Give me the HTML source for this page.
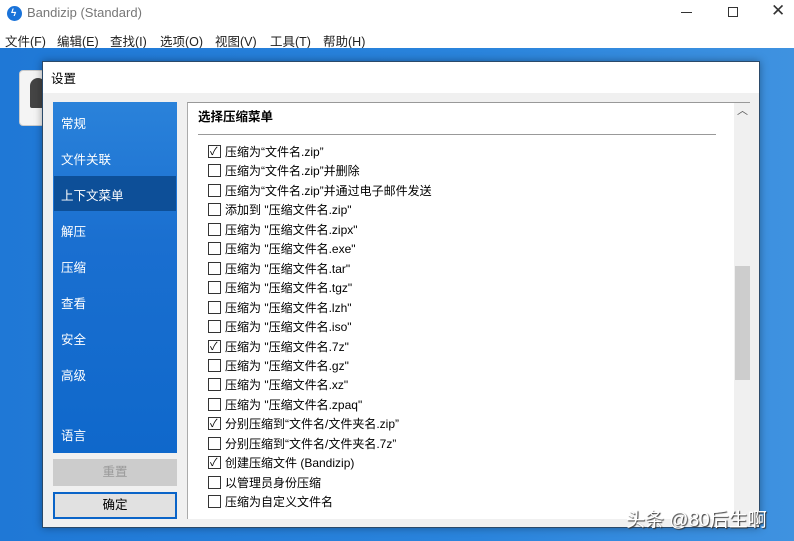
<!DOCTYPE html>
<html><head><meta charset="utf-8"><style>
*{margin:0;padding:0;box-sizing:border-box}
body{width:794px;height:541px;overflow:hidden;position:relative;background:#fff;font-family:"Liberation Sans","Noto Sans CJK SC",sans-serif;font-size:12px;color:#000}
.a{position:absolute}
.menu span{position:absolute;white-space:nowrap}
.blue{left:0;top:48px;width:794px;height:493px;background:linear-gradient(90deg,#1f78d6 0%,#2a84dc 60%,#3f92e0 100%)}
.dlg{left:42px;top:61px;width:718px;height:467px;background:#f0f0f0;border:1px solid #2b4a6a;box-shadow:0 0 8px rgba(0,0,0,.35)}
.side{left:10px;top:40px;width:124px;height:351px;background:linear-gradient(180deg,#2a82da,#1a6fd0 40%,#0f68cb)}
.side div{position:absolute;left:8px;color:#fff;font-size:12.5px}
.cb{position:absolute;left:20px;width:13px;height:13px;border:1px solid #333;background:#fff}
.row{position:absolute;left:37px;font-size:12px;white-space:nowrap}
</style></head><body>
<div class="a" style="left:7px;top:6px;width:15px;height:15px;border-radius:50%;background:#1a73d9"></div>
<div class="a" style="left:11px;top:8px;color:#fff;font-size:10px;font-weight:bold">ϟ</div>
<div class="a" style="left:27px;top:5px;font-size:13px;color:#777">Bandizip (Standard)</div>
<div class="a" style="left:681px;top:12px;width:11px;height:1px;background:#333"></div>
<div class="a" style="left:728px;top:7px;width:10px;height:10px;border:1px solid #333"></div>
<div class="a" style="left:771px;top:1px;font-size:17px;color:#333">✕</div>
<div class="a menu" style="left:0;top:31px;font-size:12.5px;color:#222"><span style="left:5px">文件(F)</span><span style="left:57px">编辑(E)</span><span style="left:110px">查找(I)</span><span style="left:160px">选项(O)</span><span style="left:215px">视图(V)</span><span style="left:270px">工具(T)</span><span style="left:323px">帮助(H)</span></div>
<div class="a blue"></div>
<div class="a" style="left:19px;top:70px;width:40px;height:56px;background:#f4f4f4;border-radius:4px;border:1px solid #ccc"></div>
<div class="a" style="left:30px;top:78px;width:16px;height:30px;background:#444;border-radius:8px 8px 2px 2px"></div>
<div class="a dlg">
 <div class="a" style="left:0;top:0;width:716px;height:31px;background:#fff"></div>
 <div class="a" style="left:8px;top:6px;font-size:12.5px">设置</div>
 <div class="a side">
  <div style="top:11px">常规</div>
  <div style="top:47px">文件关联</div>
  <div style="top:74px;left:1px;width:122px;height:35px;background:#0d4f98"></div>
  <div style="top:83px">上下文菜单</div>
  <div style="top:119px">解压</div>
  <div style="top:155px">压缩</div>
  <div style="top:191px">查看</div>
  <div style="top:227px">安全</div>
  <div style="top:263px">高级</div>
  <div style="top:323px">语言</div>
 </div>
 <div class="a" style="left:10px;top:397px;width:124px;height:27px;background:#cccccc;color:#999;text-align:center;line-height:27px;font-size:12.5px">重置</div>
 <div class="a" style="left:10px;top:430px;width:124px;height:27px;background:#e1e1e1;border:2px solid #0a64c8;text-align:center;line-height:23px;font-size:12.5px">确定</div>
 <div class="a" style="left:144px;top:40px;width:563px;height:417px;background:#fff;border-top:1px solid #999;border-left:1px solid #aaa">
  <div class="a" style="left:10px;top:3px;font-weight:bold;font-size:12.5px">选择压缩菜单</div>
  <div class="a" style="left:10px;top:31px;width:518px;height:1px;background:#999"></div>
  <div class="a" style="left:546px;top:0;width:17px;height:417px;background:#f0f0f0"></div>
  <div class="a" style="left:549px;top:-1px;font-size:11px;color:#555">︿</div>
  <div class="a" style="left:547px;top:163px;width:15px;height:114px;background:#cdcdcd"></div>
  <div id="rows"></div>
 </div>
</div>
<div class="a" style="left:626px;top:505px;font-size:19px;color:#fff;text-shadow:1px 1px 1px #333;white-space:nowrap">头条 @80后生啊</div>
<script>
var t=['1压缩为“文件名.zip”','0压缩为“文件名.zip”并删除','0压缩为“文件名.zip”并通过电子邮件发送','0添加到 "压缩文件名.zip"','0压缩为 "压缩文件名.zipx"','0压缩为 "压缩文件名.exe"','0压缩为 "压缩文件名.tar"','0压缩为 "压缩文件名.tgz"','0压缩为 "压缩文件名.lzh"','0压缩为 "压缩文件名.iso"','1压缩为 "压缩文件名.7z"','0压缩为 "压缩文件名.gz"','0压缩为 "压缩文件名.xz"','0压缩为 "压缩文件名.zpaq"','1分别压缩到“文件名/文件夹名.zip”','0分别压缩到“文件名/文件夹名.7z”','1创建压缩文件 (Bandizip)','0以管理员身份压缩','0压缩为自定义文件名'];
var h='';t.forEach(function(s,i){var y=42+i*19.45;h+='<div class="cb" style="top:'+y+'px;'+'">'+(s[0]=='1'?'<span style="position:absolute;left:1px;top:-3px;font-size:11px">✓</span>':'')+'</div><div class="row" style="top:'+(y-2)+'px">'+s.slice(1)+'</div>';});
document.getElementById('rows').innerHTML=h;
</script>
</body></html>
